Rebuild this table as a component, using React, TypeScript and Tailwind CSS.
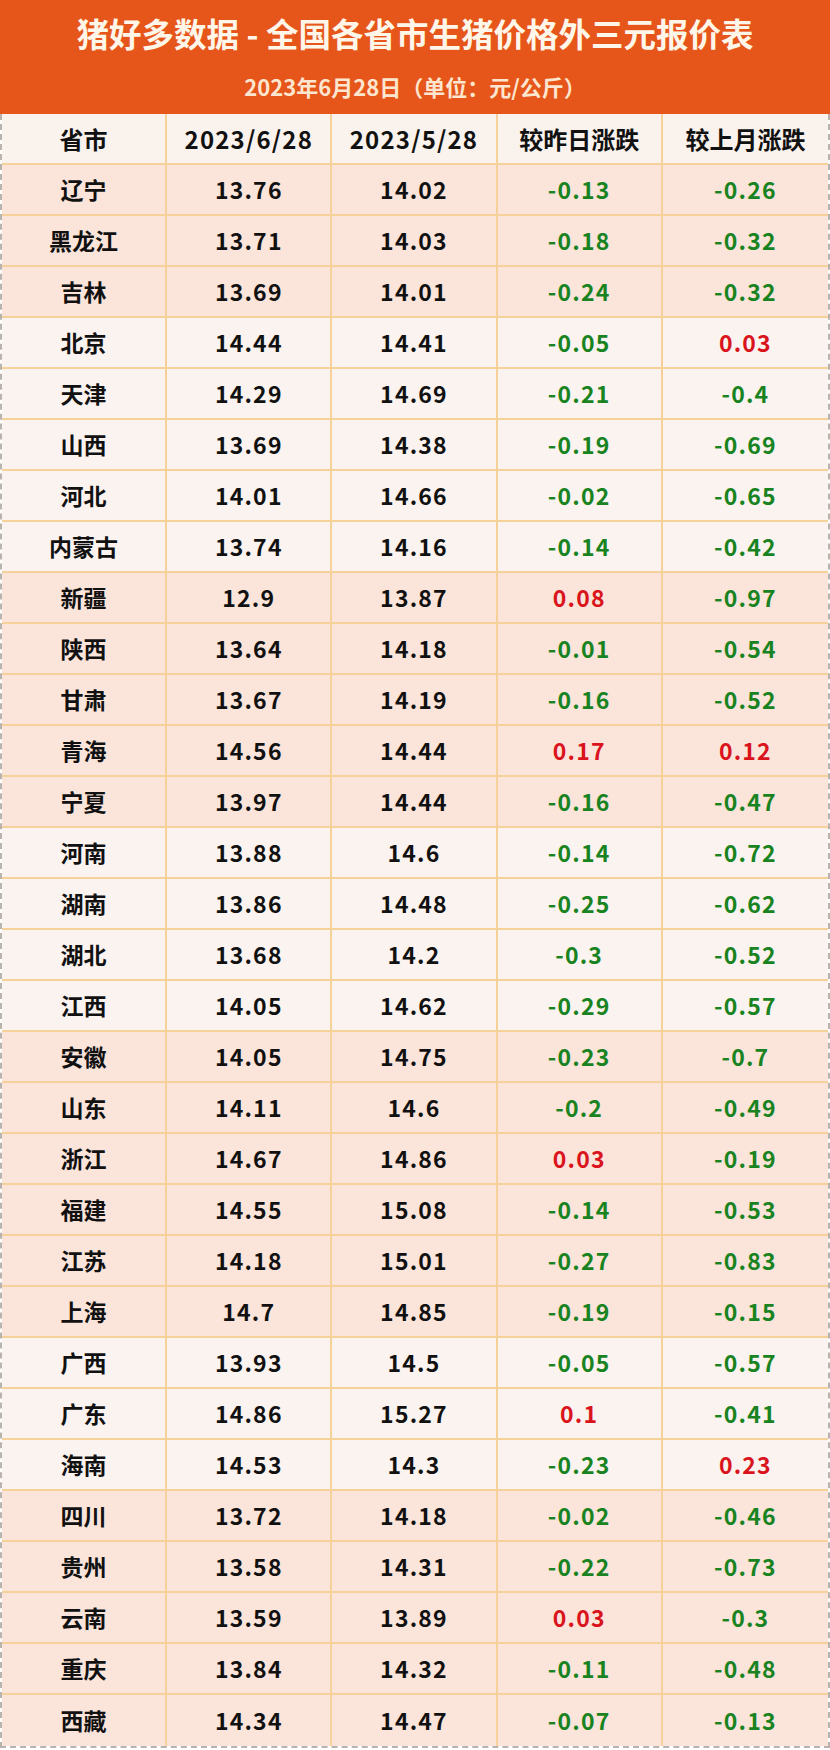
import React from "react";

type Row = [string, string, string, string, string];

const rows: Row[] = [
  ["辽宁", "13.76", "14.02", "-0.13", "-0.26"],
  ["黑龙江", "13.71", "14.03", "-0.18", "-0.32"],
  ["吉林", "13.69", "14.01", "-0.24", "-0.32"],
  ["北京", "14.44", "14.41", "-0.05", "0.03"],
  ["天津", "14.29", "14.69", "-0.21", "-0.4"],
  ["山西", "13.69", "14.38", "-0.19", "-0.69"],
  ["河北", "14.01", "14.66", "-0.02", "-0.65"],
  ["内蒙古", "13.74", "14.16", "-0.14", "-0.42"],
  ["新疆", "12.9", "13.87", "0.08", "-0.97"],
  ["陕西", "13.64", "14.18", "-0.01", "-0.54"],
  ["甘肃", "13.67", "14.19", "-0.16", "-0.52"],
  ["青海", "14.56", "14.44", "0.17", "0.12"],
  ["宁夏", "13.97", "14.44", "-0.16", "-0.47"],
  ["河南", "13.88", "14.6", "-0.14", "-0.72"],
  ["湖南", "13.86", "14.48", "-0.25", "-0.62"],
  ["湖北", "13.68", "14.2", "-0.3", "-0.52"],
  ["江西", "14.05", "14.62", "-0.29", "-0.57"],
  ["安徽", "14.05", "14.75", "-0.23", "-0.7"],
  ["山东", "14.11", "14.6", "-0.2", "-0.49"],
  ["浙江", "14.67", "14.86", "0.03", "-0.19"],
  ["福建", "14.55", "15.08", "-0.14", "-0.53"],
  ["江苏", "14.18", "15.01", "-0.27", "-0.83"],
  ["上海", "14.7", "14.85", "-0.19", "-0.15"],
  ["广西", "13.93", "14.5", "-0.05", "-0.57"],
  ["广东", "14.86", "15.27", "0.1", "-0.41"],
  ["海南", "14.53", "14.3", "-0.23", "0.23"],
  ["四川", "13.72", "14.18", "-0.02", "-0.46"],
  ["贵州", "13.58", "14.31", "-0.22", "-0.73"],
  ["云南", "13.59", "13.89", "0.03", "-0.3"],
  ["重庆", "13.84", "14.32", "-0.11", "-0.48"],
  ["西藏", "14.34", "14.47", "-0.07", "-0.13"],
];

// region groups alternate between peach and light rows
const lightRows = new Set([3, 4, 5, 6, 7, 13, 14, 15, 16, 23, 24, 25]);

const font = { fontFamily: '"Noto Sans CJK SC", "Noto Sans", sans-serif' };

function Change({ value }: { value: string }) {
  const down = value.startsWith("-");
  return <span className={down ? "text-[#188320]" : "text-[#d9141c]"}>{value}</span>;
}

const cell = "flex items-center justify-center border-r-2 border-[#f6d29a]";
const num = "tracking-[1.2px]";

export default function App() {
  return (
    <div className="w-[830px] bg-white" style={font}>
      {/* Title */}
      <div className="h-[114px] bg-[#e6561b] flex flex-col items-center">
        <h1 className="mt-[11px] text-[32.5px] leading-[44px] font-bold text-[#fff6ea]">
          猪好多数据 - 全国各省市生猪价格外三元报价表
        </h1>
        <p className="mt-[16px] text-[22px] leading-[30px] font-bold text-[#fde6cf]">
          2023年6月28日（单位：元/公斤）
        </p>
      </div>

      <div className="border-x-2 border-b-2 border-dashed border-[#b9b3ae]">
        {/* Header row */}
        <div className="grid grid-cols-5 h-[51px] bg-[#faf2ed] border-b-2 border-[#f6d29a] text-[24px] font-bold text-[#111]">
          <div className={cell}>省市</div>
          <div className={`${cell} ${num}`}>2023/6/28</div>
          <div className={`${cell} ${num}`}>2023/5/28</div>
          <div className={cell}>较昨日涨跌</div>
          <div className="flex items-center justify-center">较上月涨跌</div>
        </div>

        {rows.map((r, idx) => (
          <div
            key={r[0]}
            className={`grid grid-cols-5 h-[51px] text-[23px] font-bold text-[#111] ${
              idx < rows.length - 1 ? "border-b-2 border-[#f6d29a]" : ""
            } ${lightRows.has(idx) ? "bg-[#fbf3ef]" : "bg-[#fbe4da]"}`}
          >
            <div className={cell}>{r[0]}</div>
            <div className={`${cell} ${num}`}>{r[1]}</div>
            <div className={`${cell} ${num}`}>{r[2]}</div>
            <div className={`${cell} ${num}`}>
              <Change value={r[3]} />
            </div>
            <div className={`flex items-center justify-center ${num}`}>
              <Change value={r[4]} />
            </div>
          </div>
        ))}
      </div>
    </div>
  );
}
